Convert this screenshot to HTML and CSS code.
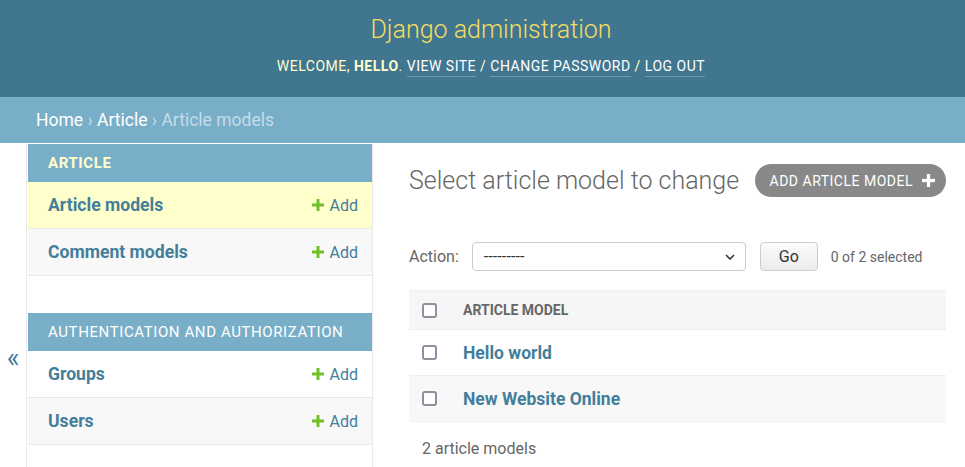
FILE: index.html
```html
<!DOCTYPE html>
<html lang="en">
<head>
<meta charset="utf-8">
<title>Select article model to change | Django site admin</title>
<link rel="stylesheet" href="styles.css">
</head>
<body>
<header class="header">
  <div class="branding">Django administration</div>
  <div class="user-tools">Welcome, <strong>hello</strong>. <a href="#">View site</a> / <a href="#">Change password</a> / <a href="#">Log out</a></div>
</header>
<nav class="breadcrumbs"><a href="#">Home</a> › <a href="#">Article</a> › Article models</nav>
<div class="main">
  <button class="toggle" type="button">«</button>
  <aside class="sidebar">
    <div class="module">
      <div class="caption caption-current">Article</div>
      <div class="row row-current"><a class="model" href="#">Article models</a><a class="add" href="#"><svg class="plus" viewBox="0 0 12 12"><rect x="4.5" y="0" width="3" height="12" fill="#70bf2b"/><rect x="0" y="4.5" width="12" height="3" fill="#70bf2b"/></svg>Add</a></div>
      <div class="row row-alt"><a class="model" href="#">Comment models</a><a class="add" href="#"><svg class="plus" viewBox="0 0 12 12"><rect x="4.5" y="0" width="3" height="12" fill="#70bf2b"/><rect x="0" y="4.5" width="12" height="3" fill="#70bf2b"/></svg>Add</a></div>
    </div>
    <div class="module">
      <div class="caption">Authentication and Authorization</div>
      <div class="row"><a class="model" href="#">Groups</a><a class="add" href="#"><svg class="plus" viewBox="0 0 12 12"><rect x="4.5" y="0" width="3" height="12" fill="#70bf2b"/><rect x="0" y="4.5" width="12" height="3" fill="#70bf2b"/></svg>Add</a></div>
      <div class="row row-alt"><a class="model" href="#">Users</a><a class="add" href="#"><svg class="plus" viewBox="0 0 12 12"><rect x="4.5" y="0" width="3" height="12" fill="#70bf2b"/><rect x="0" y="4.5" width="12" height="3" fill="#70bf2b"/></svg>Add</a></div>
    </div>
  </aside>
  <div class="content">
    <div class="title-row">
      <h1>Select article model to change</h1>
      <a class="addlink" href="#">Add article model<svg class="plus-white" viewBox="0 0 14 14"><rect x="5.25" y="0" width="3.5" height="14" fill="#fff"/><rect x="0" y="5.25" width="14" height="3.5" fill="#fff"/></svg></a>
    </div>
    <div class="actions">
      <span class="action-label">Action:</span>
      <div class="select"><span class="dashes">---------</span><svg class="chevron" viewBox="0 0 10 6"><path d="M1 1 L5 5 L9 1" fill="none" stroke="#333" stroke-width="1.6"/></svg></div>
      <button class="go" type="button">Go</button>
      <span class="counter">0 of 2 selected</span>
    </div>
    <div class="table">
      <div class="trow thead"><span class="cb"></span><span class="th">Article model</span></div>
      <div class="trow"><span class="cb"></span><a class="obj" href="#">Hello world</a></div>
      <div class="trow trow-alt"><span class="cb"></span><a class="obj" href="#">New Website Online</a></div>
    </div>
    <p class="paginator">2 article models</p>
  </div>
</div>
</body>
</html>
```

FILE: styles.css
```css
* { box-sizing: border-box; }
html, body { margin: 0; padding: 0; }
body {
  font-family: Roboto, "Liberation Sans", sans-serif;
  color: #333;
  background: #fff;
  font-size: 15px;
}
a { text-decoration: none; }

.header {
  background: #417690;
  display: flex;
  flex-direction: column;
  align-items: center;
  padding: 15px 13px 18px 30px;
}
.branding {
  font-size: 25px;
  font-weight: 300;
  color: #f5dd5d;
  line-height: 30px;
  margin-bottom: 8px;
}
.user-tools {
  font-size: 14px;
  line-height: 26px;
  letter-spacing: 0.5px;
  text-transform: uppercase;
  color: #ffc;
}
.user-tools strong { font-weight: 700; }
.user-tools a {
  color: #fff;
  border-bottom: 1px solid rgba(255,255,255,0.25);
  padding-bottom: 2px;
}

.breadcrumbs {
  background: #79aec8;
  color: #c4dce8;
  font-size: 17.5px;
  line-height: 26px;
  padding: 10px 36px;
}
.breadcrumbs a { color: #fff; }

.main {
  display: flex;
  align-items: stretch;
}
.toggle {
  flex: 0 0 27px;
  width: 27px;
  border: 0;
  border-right: 1px solid #eaeaea;
  background: #fff;
  color: #447e9b;
  font-family: Roboto, sans-serif;
  font-size: 27px;
  font-weight: 400;
  padding: 200px 0 0;
  display: flex;
  align-items: flex-start;
  justify-content: center;
  line-height: 30px;
}
.sidebar {
  flex: 0 0 346px;
  border-right: 1px solid #eaeaea;
  border-top: 1px solid transparent;
  padding-left: 1px;
  height: 330px;
}
.module { margin-bottom: 37px; }
.caption {
  background: #79aec8;
  color: #fff;
  font-size: 15px;
  letter-spacing: 0.6px;
  text-transform: uppercase;
  line-height: 38px;
  padding: 0 20px;
}
.caption-current { color: #ffc; font-weight: 700; }
.row {
  display: flex;
  justify-content: space-between;
  align-items: center;
  height: 47px;
  padding: 0 14px 0 20px;
  border-bottom: 1px solid #e8e8e8;
  background: #fff;
}
.row-alt { background: #f8f8f8; }
.row-current { background: #ffc; }
.model {
  color: #447e9b;
  font-weight: 700;
  font-size: 17.6px;
}
.add {
  color: #447e9b;
  font-size: 16px;
  display: flex;
  align-items: center;
}
.plus { width: 12px; height: 12px; margin-right: 6px; }

.content {
  flex: 1;
  padding: 21px 19px 20px 36px;
}
.title-row {
  display: flex;
  align-items: center;
  justify-content: space-between;
}
.title-row h1 {
  margin: 0;
  font-size: 25px;
  font-weight: 300;
  color: #666;
}
.addlink {
  display: flex;
  align-items: center;
  background: #888;
  color: #fff;
  border-radius: 17px;
  height: 33px;
  padding: 0 11px 0 15px;
  font-size: 14px;
  letter-spacing: 0.5px;
  text-transform: uppercase;
}
.plus-white { width: 13px; height: 13px; margin-left: 9px; }

.actions {
  display: flex;
  align-items: center;
  margin-top: 45px;
  height: 29px;
}
.action-label { color: #666; font-size: 16px; margin-right: 13px; }
.select {
  width: 274px;
  height: 29px;
  border: 1px solid #ccc;
  border-radius: 4px;
  display: flex;
  align-items: center;
  justify-content: space-between;
  padding: 0 10px 0 11px;
  font-size: 15px;
  color: #333;
}
.dashes { letter-spacing: 0.1px; font-size: 16px; }
.chevron { width: 10px; height: 6px; }
.go {
  margin-left: 14px;
  width: 58px;
  height: 29px;
  border: 1px solid #ccc;
  border-radius: 4px;
  background: linear-gradient(#fbfbfb, #ececec);
  font-family: Roboto, sans-serif;
  font-size: 16px;
  color: #333;
}
.counter { margin-left: 13px; font-size: 14px; color: #666; }

.table {
  margin-top: 19px;
  border-top: 1px solid #eee;
}
.trow {
  display: flex;
  align-items: center;
  height: 46px;
  border-bottom: 1px solid #eee;
  padding-left: 13px;
}
.thead { background: #f6f6f6; height: 39px; }
.trow-alt { background: #f8f8f8; }
.cb {
  width: 15px;
  height: 15px;
  border: 2px solid #8f8f9d;
  border-radius: 3px;
  background: #fff;
  margin-right: 26px;
}
.th {
  font-size: 14px;
  font-weight: 700;
  color: #666;
  text-transform: uppercase;
}
.obj {
  color: #447e9b;
  font-weight: 700;
  font-size: 17.5px;
}
.paginator {
  margin: 0;
  padding: 17px 13px 0;
  font-size: 16px;
  color: #666;
}
```
